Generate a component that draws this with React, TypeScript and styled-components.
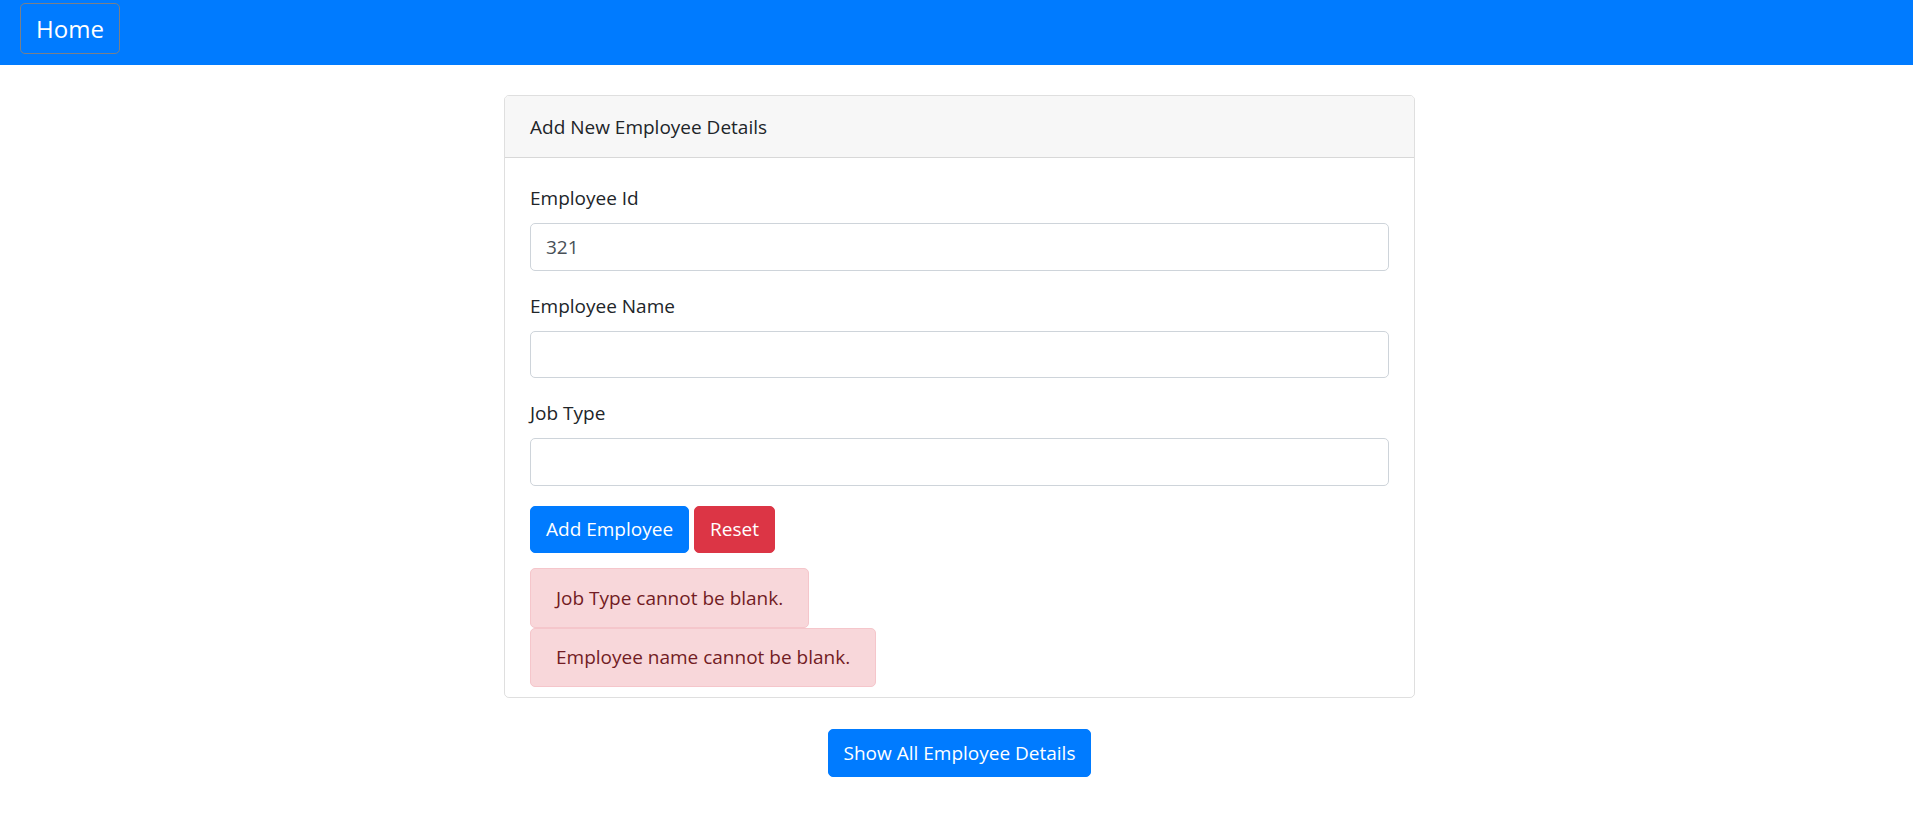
import React from 'react';
import styled, { createGlobalStyle } from 'styled-components';

const GlobalStyle = createGlobalStyle`
  html, body {
    margin: 0;
    padding: 0;
    background: #fff;
    font-family: "Open Sans", "Noto Sans", sans-serif;
    color: #212529;
  }
  * {
    box-sizing: border-box;
  }
`;

const Navbar = styled.nav`
  height: 65px;
  background: #007bff;
  padding: 3px 20px 0;
`;

const Brand = styled.a`
  display: inline-flex;
  align-items: center;
  justify-content: center;
  width: 100px;
  height: 51px;
  border: 1px solid #7a8088;
  border-radius: 5px;
  color: #fff;
  font-size: 24px;
  text-decoration: none;
`;

const Main = styled.main`
  display: flex;
  flex-direction: column;
  align-items: center;
  padding: 30px 0 0 6px;
`;

const Card = styled.section`
  width: 911px;
  border: 1px solid rgba(0, 0, 0, 0.125);
  border-radius: 5px;
  overflow: hidden;
`;

const CardHeader = styled.header`
  height: 62px;
  display: flex;
  align-items: center;
  padding: 0 25px;
  background: #f7f7f7;
  border-bottom: 1px solid rgba(0, 0, 0, 0.125);
  font-size: 19px;
`;

const CardBody = styled.form`
  padding: 25px 25px 10px;
`;

const FormGroup = styled.div`
  display: flex;
  flex-direction: column;
  margin-bottom: 20px;
`;

const Label = styled.label`
  font-size: 19px;
  line-height: 30px;
  margin-bottom: 10px;
`;

const Input = styled.input`
  height: 47.5px;
  border: 1px solid #ced4da;
  border-radius: 5px;
  padding: 0 15px;
  font-family: inherit;
  font-size: 19px;
  color: #495057;
  outline: none;
`;

const ButtonRow = styled.div`
  display: flex;
  gap: 5px;
`;

const Button = styled.button<{ variant: 'primary' | 'danger' }>`
  height: 47.5px;
  padding: 0 15px;
  border: 1px solid ${({ variant }) => (variant === 'primary' ? '#007bff' : '#dc3545')};
  background: ${({ variant }) => (variant === 'primary' ? '#007bff' : '#dc3545')};
  color: #fff;
  border-radius: 5px;
  font-family: inherit;
  font-size: 19px;
  cursor: pointer;
`;

const Alerts = styled.div`
  display: flex;
  flex-direction: column;
  align-items: flex-start;
  margin-top: 15px;
`;

const Alert = styled.div`
  height: 59.5px;
  display: flex;
  align-items: center;
  padding: 0 25px;
  background: #f8d7da;
  border: 1px solid #f5c6cb;
  border-radius: 5px;
  color: #721c24;
  font-size: 19px;
`;

const Footer = styled.div`
  margin-top: 31px;
`;

export default function App() {
  return (
    <>
      <GlobalStyle />
      <Navbar>
        <Brand href="#">Home</Brand>
      </Navbar>
      <Main>
        <Card>
          <CardHeader>Add New Employee Details</CardHeader>
          <CardBody onSubmit={(e) => e.preventDefault()}>
            <FormGroup>
              <Label>Employee Id</Label>
              <Input defaultValue="321" />
            </FormGroup>
            <FormGroup>
              <Label>Employee Name</Label>
              <Input />
            </FormGroup>
            <FormGroup>
              <Label>Job Type</Label>
              <Input />
            </FormGroup>
            <ButtonRow>
              <Button variant="primary">Add Employee</Button>
              <Button variant="danger" type="reset">Reset</Button>
            </ButtonRow>
            <Alerts>
              <Alert>Job Type cannot be blank.</Alert>
              <Alert>Employee name cannot be blank.</Alert>
            </Alerts>
          </CardBody>
        </Card>
        <Footer>
          <Button variant="primary">Show All Employee Details</Button>
        </Footer>
      </Main>
    </>
  );
}
